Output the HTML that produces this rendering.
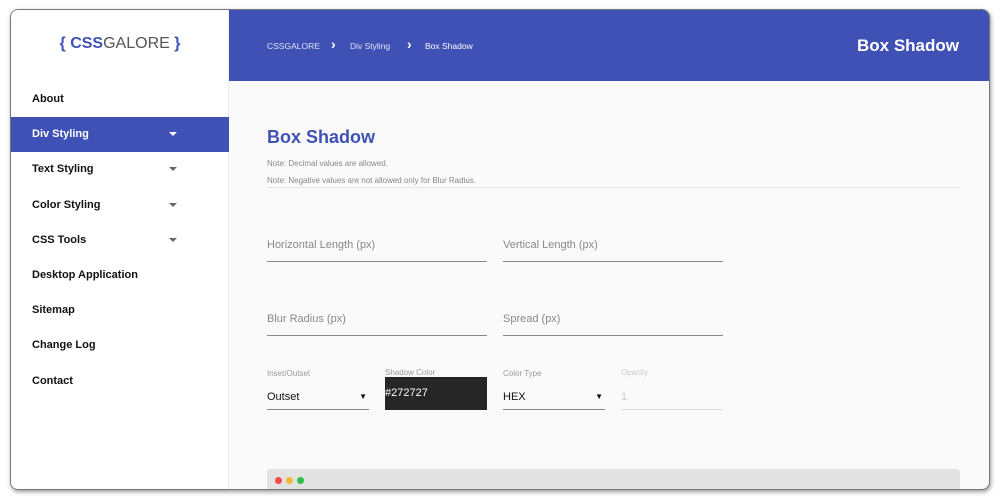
<!DOCTYPE html>
<html><head><style>
*{margin:0;padding:0;box-sizing:border-box}
body{width:1000px;height:500px;background:#fff;font-family:"Liberation Sans",Arial,sans-serif;position:relative;overflow:hidden}
.win{position:absolute;left:10px;top:9px;width:980px;height:481px;border-radius:8px;overflow:hidden;background:#fafafa;border:1px solid #777;box-shadow:1px 2px 4px rgba(0,0,0,.4)}
.side{position:absolute;left:0;top:0;width:218px;height:100%;background:#fff;border-right:1px solid #eee}
.logo{position:absolute;top:25px;left:0;width:218px;text-align:center;font-size:16px;color:#3f51b5}
.logo b{font-weight:bold}.logo span{color:#555;font-weight:normal}
.nav{position:absolute;top:72px;left:0;width:218px}
.nav div{height:35.2px;line-height:35px;padding-left:21px;font-size:11px;font-weight:bold;color:#111;position:relative}
.nav div.act{background:#3f51b5;color:#fff}
.nav div i{position:absolute;left:158px;top:15px;border-left:4px solid transparent;border-right:4px solid transparent;border-top:4px solid #666}
.nav div.act i{border-top-color:#fff}
.hdr{position:absolute;left:218px;top:0;right:0;height:71px;background:#3f51b5;color:#fff}
.bc{position:absolute;top:31px;font-size:8.5px;color:#dfe3f5;white-space:nowrap}
.ch{position:absolute;top:26px;font-size:14px;font-weight:bold;color:#fff}
.ht{position:absolute;right:30px;top:26px;font-size:17px;font-weight:bold}
.main{position:absolute;left:218px;top:71px;right:0;bottom:0}
h1{position:absolute;left:38px;top:46px;font-size:18px;color:#3f51b5;font-weight:bold}
.note{position:absolute;left:38px;font-size:8px;color:#888}
.hr{position:absolute;left:38px;width:692px;border-top:1px solid #e6e6e6}
.f{position:absolute;width:220px;border-bottom:1px solid #888;font-size:11px;color:#888;height:23px}
.lab{position:absolute;font-size:8px;color:#999}
.sel{position:absolute;width:102px;height:28px;border-bottom:1px solid #888;font-size:11px;color:#111;padding-top:9px}
.sel.a:after{content:"▼";position:absolute;right:2px;top:10px;font-size:8px}
.bar{position:absolute;left:38px;width:693px;height:30px;background:#e2e2e2;border-radius:3px}
.dot{position:absolute;top:8px;width:7px;height:7px;border-radius:50%}
</style></head><body>
<div class="win">
<div class="side">
<div class="logo"><b>{ CSS</b><span>GALORE</span><b> }</b></div>
<div class="nav">
<div>About</div>
<div class="act">Div Styling<i></i></div>
<div>Text Styling<i></i></div>
<div>Color Styling<i></i></div>
<div>CSS Tools<i></i></div>
<div>Desktop Application</div>
<div>Sitemap</div>
<div>Change Log</div>
<div>Contact</div>
</div>
</div>
<div class="hdr">
<div class="bc" style="left:38px">CSSGALORE</div>
<div class="ch" style="left:102px">›</div>
<div class="bc" style="left:121px">Div Styling</div>
<div class="ch" style="left:178px">›</div>
<div class="bc" style="left:196px;color:#fff">Box Shadow</div>
<div class="ht">Box Shadow</div>
</div>
<div class="main">
<h1>Box Shadow</h1>
<div class="note" style="top:78px">Note: Decimal values are allowed.</div>
<div class="note" style="top:95px">Note: Negative values are not allowed only for Blur Radius.</div>
<div class="hr" style="top:106px"></div>
<div class="f" style="left:38px;top:158px">Horizontal Length (px)</div>
<div class="f" style="left:274px;top:158px">Vertical Length (px)</div>
<div class="f" style="left:38px;top:232px">Blur Radius (px)</div>
<div class="f" style="left:274px;top:232px">Spread (px)</div>
<div class="lab" style="left:38px;top:288px">Inset/Outset</div>
<div class="sel a" style="left:38px;top:301px">Outset</div>
<div class="lab" style="left:156px;top:287px">Shadow Color</div>
<div style="position:absolute;left:156px;top:296px;width:102px;height:33px;background:#262626;color:#fff;font-size:11px;padding-top:10px">#272727</div>
<div class="lab" style="left:274px;top:288px">Color Type</div>
<div class="sel a" style="left:274px;top:301px">HEX</div>
<div class="lab" style="left:392px;top:287px;color:#ccc">Opacity</div>
<div class="sel" style="left:392px;top:301px;color:#ccc;border-color:#ddd">1</div>
<div class="bar" style="top:388px"><div class="dot" style="left:8px;background:#f04b4b"></div><div class="dot" style="left:19px;background:#f5b83a"></div><div class="dot" style="left:30px;background:#2fbf4a"></div></div>
</div>
</div>
</body></html>
